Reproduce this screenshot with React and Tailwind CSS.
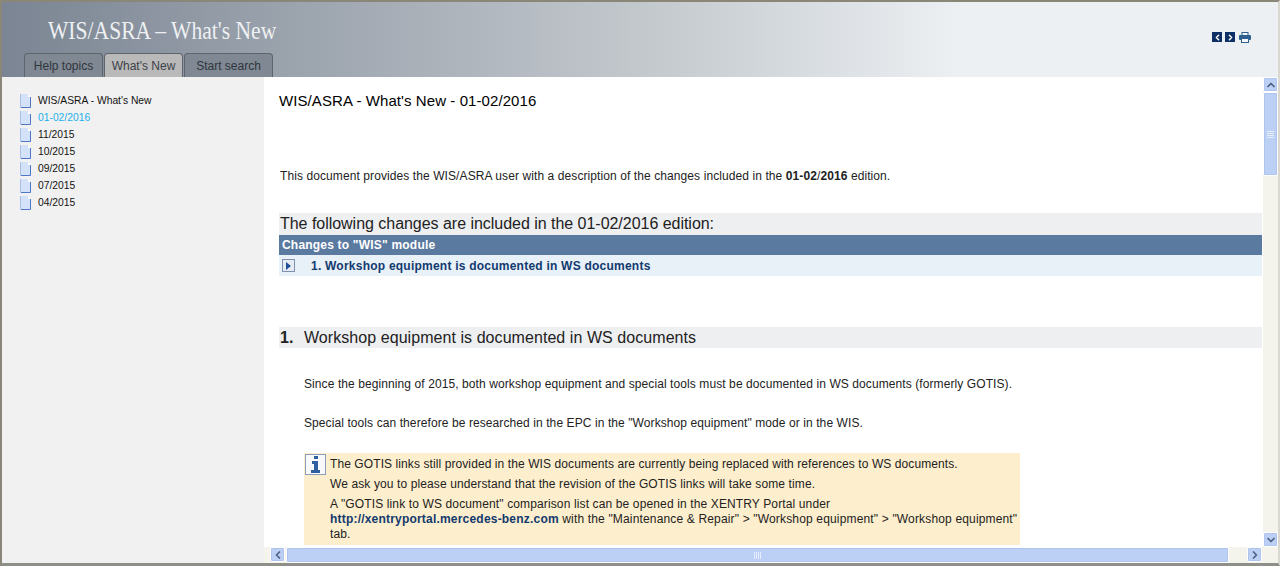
import { ChevronLeft, ChevronRight, ChevronUp, ChevronDown } from "lucide-react";

const tocItems = ["WIS/ASRA - What's New", "01-02/2016", "11/2015", "10/2015", "09/2015", "07/2015", "04/2015"];

function PageIcon() {
  return (
    <svg width="11" height="14" viewBox="0 0 11 14" className="shrink-0">
      <path d="M0 0H8L11 3V14H0Z" fill="#d3e2f9" />
      <path d="M0.5 0V13.5" stroke="#a9bfe6" />
      <path d="M10.5 3V13.5H1" fill="none" stroke="#4f76c8" />
      <path d="M8 0V3H11Z" fill="#fff" />
    </svg>
  );
}

function ScrollButton({ children }) {
  return (
    <div className="flex h-[15px] w-[15px] shrink-0 items-center justify-center rounded-[2px] border border-white bg-[#bccff5] text-[#4d6185] shadow-[inset_0_0_0_1px_#aec4ee]">
      {children}
    </div>
  );
}

function Tab({ label, active, width }) {
  return (
    <div
      className={`flex h-[24px] items-center justify-center rounded-t-[4px] border border-b-0 border-[#5d646c] text-[12px] ${width} ${
        active ? "bg-[#b9b9b9] text-[#3c4148]" : "bg-[#7f8893] text-[#30363d]"
      }`}
    >
      {label}
    </div>
  );
}

export default function App() {
  return (
    <div className="flex h-[566px] w-[1280px] flex-col overflow-hidden border-t-2 border-b-[3px] border-l-2 border-r-2 border-t-[#8a8678] border-b-[#8f8f8a] border-l-[#8a8678] border-r-[#d8d8d0] bg-white font-['Liberation_Sans',Arial,sans-serif]">
      {/* header */}
      <div className="flex h-[75px] shrink-0 justify-between bg-gradient-to-r from-[#7b8593] via-[#c3c8cd] via-50% to-[#ecf0f3] to-75%">
        <div className="flex flex-col pl-[22px]">
          <div className="pt-[13px] pl-[24px] font-['Liberation_Serif',serif] text-[26px] leading-[32px] whitespace-nowrap text-[#eef0f2]">
            <span className="inline-block origin-left scale-x-[0.83]">WIS/ASRA – What's New</span>
          </div>
          <div className="mt-auto flex gap-[1px]">
            <Tab label="Help topics" width="w-[79px]" />
            <Tab label="What's New" width="w-[79px]" active />
            <Tab label="Start search" width="w-[89px]" />
          </div>
        </div>
        <div className="flex items-start gap-[3px] pt-[30px] pr-[27px]">
          <div className="flex h-[10px] w-[10px] items-center justify-center bg-[#0d2f66] text-white">
            <ChevronLeft size={9} strokeWidth={4} />
          </div>
          <div className="flex h-[10px] w-[10px] items-center justify-center bg-[#0d2f66] text-white">
            <ChevronRight size={9} strokeWidth={4} />
          </div>
          <svg width="12" height="11" viewBox="0 0 12 11" className="ml-[1px]">
            <rect x="3" y="0.5" width="6" height="3" fill="#f4f6f9" stroke="#2f6190" />
            <rect x="0" y="3" width="12" height="5" rx="1" fill="#2f6190" />
            <rect x="2.5" y="6.5" width="7" height="4" fill="#f4f6f9" stroke="#2f6190" />
          </svg>
        </div>
      </div>

      <div className="flex min-h-0 flex-1">
        {/* toc */}
        <div className="w-[262px] shrink-0 bg-[#f1f1f1] pt-[15px] pl-[18px]">
          {tocItems.map((item, i) => (
            <div key={item} className="flex h-[17px] items-center gap-[7px]">
              <PageIcon />
              <span className={`text-[10.3px] ${i === 1 ? "text-[#1cb0ee]" : "text-[#111]"}`}>{item}</span>
            </div>
          ))}
        </div>

        {/* document + scrollbars */}
        <div className="flex min-w-0 flex-1 flex-col">
          <div className="flex min-h-0 flex-1">
            <div className="min-w-0 flex-1 overflow-hidden pr-[1px] pl-[15px] text-[12px] tracking-[0.09px] text-[#222]">
              <h1 className="pt-[15px] text-[15px] leading-[18px] tracking-[0.08px] text-black">WIS/ASRA - What's New - 01-02/2016</h1>
              <p className="mt-[59px] pl-[1px] leading-[14px]">
                This document provides the WIS/ASRA user with a description of the changes included in the <b>01-02</b>/<b>2016</b> edition.
              </p>
              <div className="mt-[30px] flex h-[22px] items-center bg-[#eeeff1] pl-[1px] text-[16px] tracking-[-0.03px] text-[#222]">
                The following changes are included in the 01-02/2016 edition:
              </div>
              <div className="flex h-[20px] items-center bg-[#5b7a9f] pl-[3px] font-bold tracking-[0.2px] text-white">Changes to "WIS" module</div>
              <div className="flex h-[21px] items-center bg-[#e8f0f8] pl-[3px] font-bold text-[#123a6e]">
                <span className="flex h-[13px] w-[13px] items-center justify-center border border-[#8090b0] bg-[#e6ebf4]">
                  <span className="h-0 w-0 border-y-[4px] border-l-[5px] border-y-transparent border-l-[#1f4f96]" />
                </span>
                <span className="ml-[16px] tracking-[0.23px]">1. Workshop equipment is documented in WS documents</span>
              </div>
              <div className="mt-[51px] flex h-[21px] items-center bg-[#eeeff1] pl-[1px] text-[16px]">
                <b className="w-[24px]">1.</b>
                <span className="tracking-[0.06px]">Workshop equipment is documented in WS documents</span>
              </div>
              <div className="pl-[25px]">
                <p className="mt-[29px] leading-[14px]">
                  Since the beginning of 2015, both workshop equipment and special tools must be documented in WS documents (formerly GOTIS).
                </p>
                <p className="mt-[25px] leading-[14px]">
                  Special tools can therefore be researched in the EPC in the "Workshop equipment" mode or in the WIS.
                </p>
                <div className="mt-[23px] flex h-[92px] w-[716px] gap-[4px] bg-[#fdeecd] pt-[1px] pl-[1px]">
                  <div className="flex h-[21px] w-[21px] shrink-0 items-center justify-center border border-[#8b9db8] bg-[#f7f9fd]">
                    <svg width="12" height="17" viewBox="0 0 12 17">
                      <path d="M4 0H8V3H4ZM2 5H8V14H10V17H1V14H4V8H2Z" fill="#2f5f9e" />
                    </svg>
                  </div>
                  <div className="leading-[14px]">
                    <p className="mt-[3px]">The GOTIS links still provided in the WIS documents are currently being replaced with references to WS documents.</p>
                    <p className="mt-[6px] tracking-[0.11px]">We ask you to please understand that the revision of the GOTIS links will take some time.</p>
                    <p className="mt-[6px] tracking-[0.13px]">A "GOTIS link to WS document" comparison list can be opened in the XENTRY Portal under</p>
                    <p className="mt-[1px] tracking-[0.16px]">
                      <b className="tracking-[0.2px] text-[#123a6e]">http://xentryportal.mercedes-benz.com</b> with the "Maintenance &amp; Repair" &gt; "Workshop equipment" &gt; "Workshop equipment"
                    </p>
                    <p className="mt-[1px]">tab.</p>
                  </div>
                </div>
              </div>
            </div>

            {/* vertical scrollbar */}
            <div className="flex w-[15px] shrink-0 flex-col bg-[#f4f3ec]">
              <ScrollButton><ChevronUp size={12} strokeWidth={3.5} /></ScrollButton>
              <div className="flex h-[84px] flex-col items-center justify-center gap-[1px] rounded-[2px] border border-white bg-[#bccff5] shadow-[inset_0_0_0_1px_#aec4ee]">
                <div className="h-[1px] w-[7px] bg-[#e6edfc]" />
                <div className="h-[1px] w-[7px] bg-[#e6edfc]" />
                <div className="h-[1px] w-[7px] bg-[#e6edfc]" />
                <div className="h-[1px] w-[7px] bg-[#e6edfc]" />
              </div>
              <div className="flex-1" />
              <ScrollButton><ChevronDown size={12} strokeWidth={3.5} /></ScrollButton>
            </div>
          </div>

          {/* horizontal scrollbar */}
          <div className="flex h-[16px] shrink-0 bg-[#f4f3ec] pl-[6px]">
            <ScrollButton><ChevronLeft size={12} strokeWidth={3.5} /></ScrollButton>
            <div className="ml-[1px] flex flex-1 items-center justify-center gap-[1px] rounded-[2px] border border-white bg-[#bccff5] shadow-[inset_0_0_0_1px_#aec4ee]">
              <div className="h-[7px] w-[1px] bg-[#e6edfc]" />
              <div className="h-[7px] w-[1px] bg-[#e6edfc]" />
              <div className="h-[7px] w-[1px] bg-[#e6edfc]" />
              <div className="h-[7px] w-[1px] bg-[#e6edfc]" />
            </div>
            <div className="w-[18px]" />
            <ScrollButton><ChevronRight size={12} strokeWidth={3.5} /></ScrollButton>
            <div className="w-[16px]" />
          </div>
        </div>
      </div>
    </div>
  );
}
